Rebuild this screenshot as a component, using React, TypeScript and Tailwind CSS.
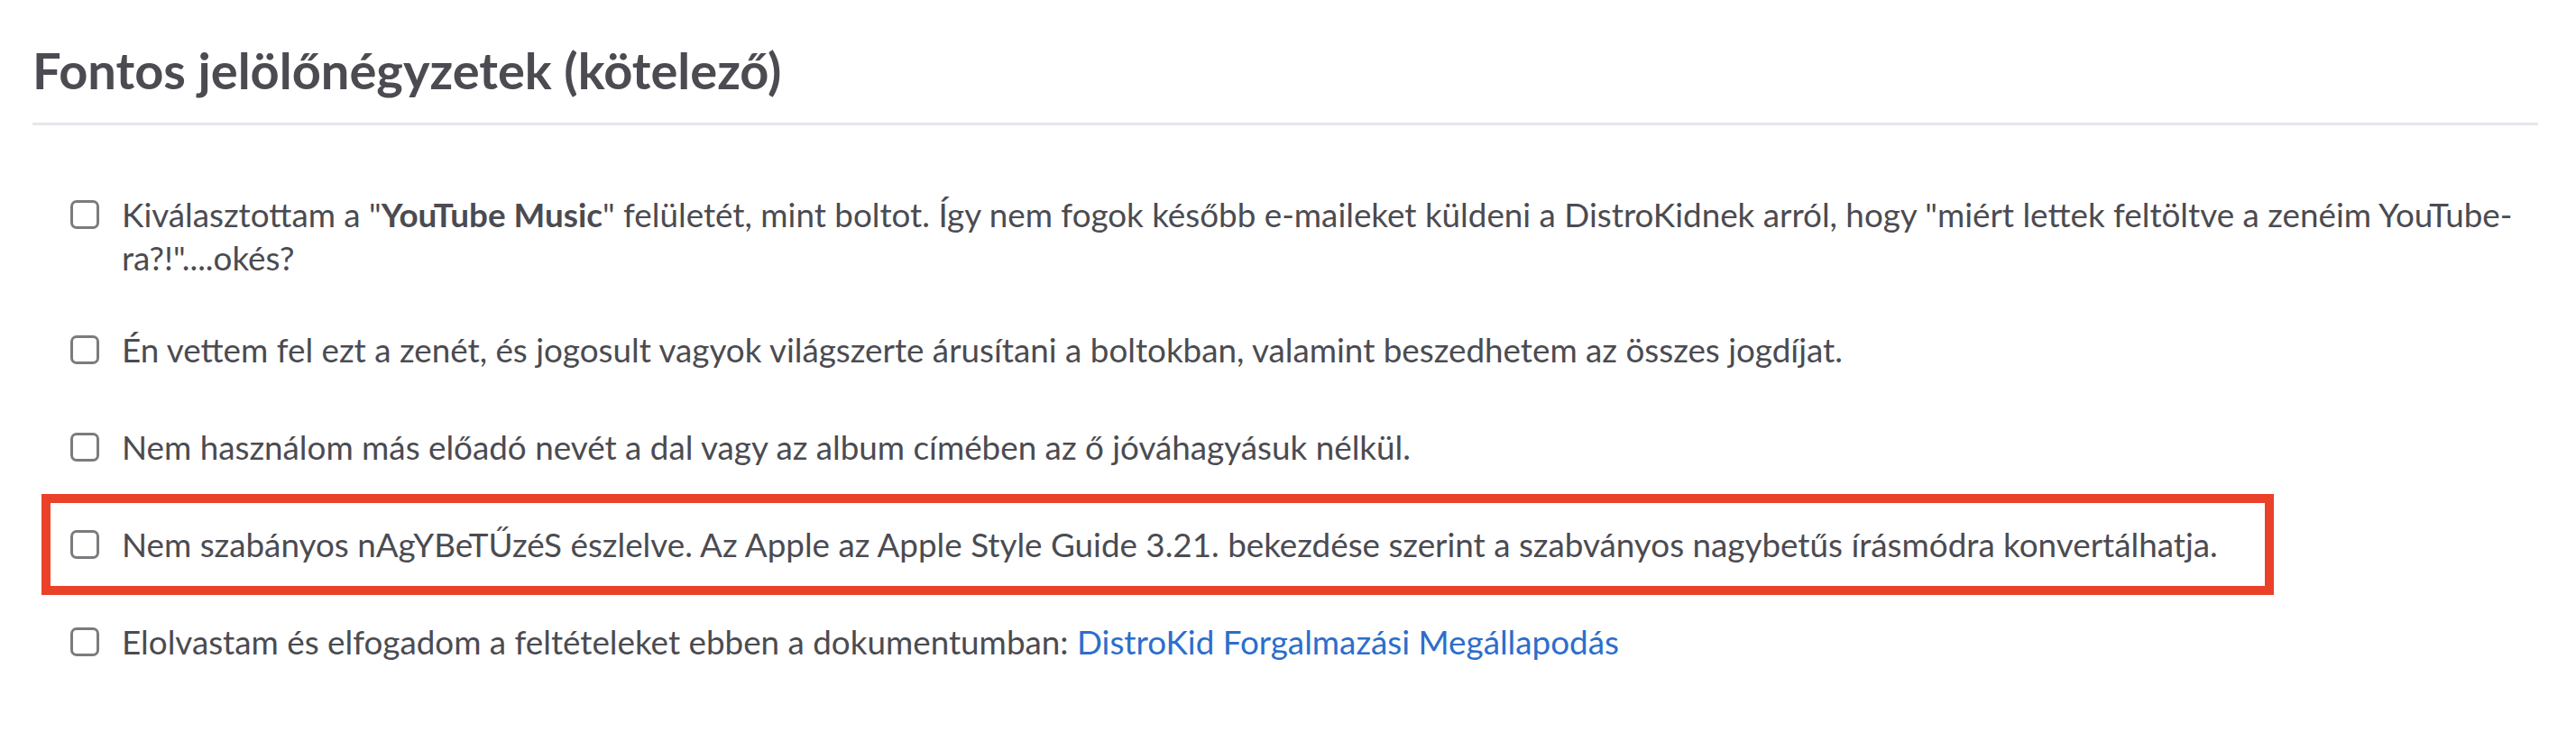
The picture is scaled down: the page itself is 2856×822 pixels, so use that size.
import { useState } from 'react';

type Item = {
  id: string;
  content: React.ReactNode;
  highlight?: boolean;
};

const items: Item[] = [
  {
    id: 'youtube',
    content: (
      <>
        Kiválasztottam a "<b className="font-bold">YouTube Music</b>" felületét, mint boltot. Így nem fogok később
        e-maileket küldeni a DistroKidnek arról, hogy "miért lettek feltöltve a zenéim YouTube-ra?!"....okés?
      </>
    ),
  },
  {
    id: 'rights',
    content: (
      <>
        Én vettem fel ezt a zenét, és jogosult vagyok világszerte árusítani a boltokban, valamint beszedhetem az
        összes jogdíjat.
      </>
    ),
  },
  {
    id: 'artist',
    content: <>Nem használom más előadó nevét a dal vagy az album címében az ő jóváhagyásuk nélkül.</>,
  },
  {
    id: 'caps',
    highlight: true,
    content: (
      <>
        Nem szabányos nAgYBeTŰzéS észlelve. Az Apple az Apple Style Guide 3.21. bekezdése szerint a szabványos
        nagybetűs írásmódra konvertálhatja.
      </>
    ),
  },
  {
    id: 'terms',
    content: (
      <>
        Elolvastam és elfogadom a feltételeket ebben a dokumentumban:{' '}
        <a href="#" className="text-[#2c6ecb]">
          DistroKid Forgalmazási Megállapodás
        </a>
      </>
    ),
  },
];

// ─── Checkbox row ────────────────────────────────────────────────────────────
function CheckRow({
  item,
  first,
  checked,
  onToggle,
}: {
  item: Item;
  first: boolean;
  checked: boolean;
  onToggle: () => void;
}) {
  let cls = 'ml-[10px] border-[10px] border-transparent py-[20px] pl-[22px]';
  if (item.highlight) cls = 'ml-[10px] -my-[2px] w-fit border-[10px] border-[#ea4129] py-[22px] pl-[22px] pr-[52px]';
  if (first) cls += ' pb-[14px]';

  return (
    <li className={cls}>
      <label className="flex cursor-pointer items-start gap-[25px]">
        <span className="flex h-[48px] shrink-0 items-center">
          <input type="checkbox" checked={checked} onChange={onToggle} className="sr-only" />
          <span className="block h-[32px] w-[32px] rounded-[7px] border-[3px] border-[#7b7b7f] bg-white" />
        </span>
        <span className="text-[36.8px] leading-[48px] text-[#4b4b51]">{item.content}</span>
      </label>
    </li>
  );
}

export default function App() {
  const [checked, setChecked] = useState<Record<string, boolean>>({});

  return (
    <div
      className="min-h-screen w-full bg-white pl-[36px] pr-[42px] pt-[46px]"
      style={{ fontFamily: 'Lato, "Open Sans", sans-serif' }}
    >
      <h2 className="text-[56px] font-bold leading-[64px] text-[#4b4b51]">Fontos jelölőnégyzetek (kötelező)</h2>
      <div className="mt-[26px] h-[3px] bg-[#e6e6eb]" />

      {/* text column runs a touch past the divider so the first item wraps after "YouTube-" */}
      <ul className="-mr-[36px] mt-[45px] flex flex-col">
        {items.map((item, i) => (
          <CheckRow
            key={item.id}
            item={item}
            first={i === 0}
            checked={!!checked[item.id]}
            onToggle={() => setChecked((c) => ({ ...c, [item.id]: !c[item.id] }))}
          />
        ))}
      </ul>
    </div>
  );
}
